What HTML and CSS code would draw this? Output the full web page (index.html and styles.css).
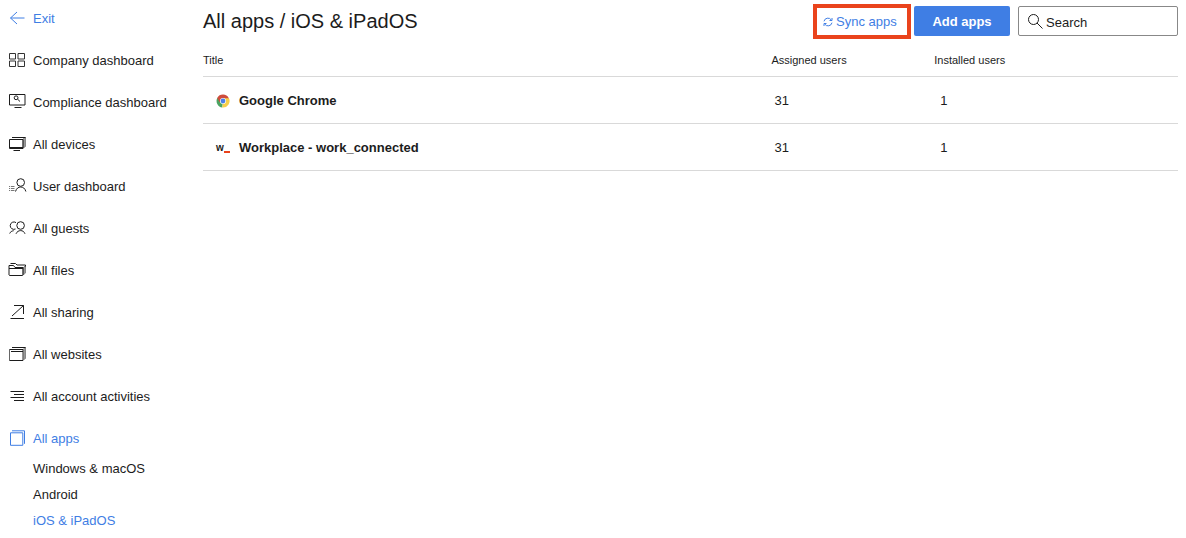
FILE: index.html
```
<!DOCTYPE html>
<html lang="en">
<head>
  <meta charset="UTF-8">
  <meta name="viewport" content="width=device-width, initial-scale=1.0">
  <title>All apps / iOS &amp; iPadOS</title>
  <link rel="stylesheet" href="styles.css">
</head>
<body>
  <div class="layout">
    <nav class="sidebar">
      <a class="nav-item active" href="#">
        <svg class="icon" viewBox="0 0 18 18"><path d="M16.5 9H2.5M9 3L2.5 9L9 15"/></svg>
        Exit
      </a>
      <a class="nav-item" href="#">
        <svg class="icon grid-icon" viewBox="0 0 18 18"><path d="M1.500 2.500h6v5.500h-6zM10 2.500h6.500v5.500h-6.500zM1.500 10h6v5.500h-6zM10 10h6.500v5.500h-6.500z"/></svg>
        Company dashboard
      </a>
      <a class="nav-item" href="#">
        <svg class="icon" viewBox="0 0 18 18"><path d="M1.5 1.5h15.500v10.500h-15.500zM6.500 14.500h7M9.600 6.200l2.400 2.300"/><circle cx="8.100" cy="4.800" r="1.900"/></svg>
        Compliance dashboard
      </a>
      <a class="nav-item" href="#">
        <svg class="icon" viewBox="0 0 18 18"><path class="shade" d="M15 4l2.500-1.500v9L15 13z"/><path d="M4 2.500h13.500M1.500 12.500h13.500M5.500 15.500h6.500M1.500 4.500h13.500v9h-13.500z"/></svg>
        All devices
      </a>
      <a class="nav-item" href="#">
        <svg class="icon" viewBox="0 0 18 18"><circle cx="12.700" cy="5.500" r="3.800"/><path d="M7.500 14.500c1-3.300 3-4.500 5.200-4.500s4.200 1.200 5.200 4.500"/><path class="dots" d="M1 9.500h1.200M3 9.500h3.500M1 11.500h1.200M3 11.500h3.500M1 13.500h1.200M3 13.500h3.500"/></svg>
        User dashboard
      </a>
      <a class="nav-item" href="#">
        <svg class="icon" viewBox="0 0 18 18"><circle cx="12.600" cy="6.500" r="3.800"/><path d="M8 3.600A3.700 3.700 0 1 0 7.500 10M8 14.800c1-2.200 2.700-3.200 4.600-3.200s3.600 1 4.400 3.200M1.700 14.500c.7-1.700 2-2.500 4-2.800"/></svg>
        All guests
      </a>
      <a class="nav-item" href="#">
        <svg class="icon" viewBox="0 0 18 18"><path class="shade" d="M15 7l2.500-2.500v7.500L15 14z"/><path d="M1 14V4.500h4.500l1.500 2h8v7.500l-.5.500h-13zM1 7.500h14M2.500 2.500h5l1.500 1.500h8.500v1.500"/></svg>
        All files
      </a>
      <a class="nav-item" href="#">
        <svg class="icon" viewBox="0 0 18 18"><path d="M6 2.500h9.500V11M15.500 2.500L4 13M2.500 15.500h13.500"/></svg>
        All sharing
      </a>
      <a class="nav-item" href="#">
        <svg class="icon" viewBox="0 0 18 18"><path class="shade" d="M15 4.500l2.500-2v11L15 15z"/><path class="shade-line" d="M1.500 4.500v11M15 4.500v11"/><path d="M1.500 15.500h13.500M1.500 4.500h13.500M3 6.500h12M4 2.500h13.500"/></svg>
        All websites
      </a>
      <a class="nav-item" href="#">
        <svg class="icon" viewBox="0 0 18 18"><path d="M2.500 4.500h13.500M6 7.500h10M2.500 10.500h13.500M6 13.500h10"/></svg>
        All account activities
      </a>
      <a class="nav-item active" href="#">
        <svg class="icon" viewBox="0 0 18 18"><path d="M2.500 3.800h12.300v12.500h-12.300zM4 1.800h12.500v13"/></svg>
        All apps
      </a>
      <div class="subnav">
        <a class="subnav-item" href="#">Windows &amp; macOS</a>
        <a class="subnav-item" href="#">Android</a>
        <a class="subnav-item active" href="#">iOS &amp; iPadOS</a>
      </div>
    </nav>

    <main class="content">
      <header class="toolbar">
        <h1>All apps / iOS &amp; iPadOS</h1>
        <button class="btn-sync" type="button">
          <svg class="sync-icon" viewBox="0 0 10 10"><path d="M1 4.300A4 4 0 0 1 8.300 3M9 5.700A4 4 0 0 1 1.700 7M9 1v2.500H6.500M1 9V6.500h2.500"/></svg>
          Sync apps
        </button>
        <button class="btn-add" type="button">Add apps</button>
        <label class="search">
          <svg class="search-icon" viewBox="0 0 16 16"><circle cx="6.500" cy="6.500" r="5"/><path d="M10 10l5.500 5.500"/></svg>
          <input type="text" placeholder="Search" aria-label="Search">
        </label>
      </header>

      <table class="apps">
        <thead>
          <tr>
            <th class="col-title">Title</th>
            <th class="col-assigned">Assigned users</th>
            <th class="col-installed">Installed users</th>
          </tr>
        </thead>
        <tbody>
          <tr>
            <td>
              <div class="app">
                <svg class="app-icon" viewBox="0 0 14 14">
                  <path fill="#4ba462" d="M7 7L1.400 3.800A6.500 6.500 0 0 0 6.300 13.500z"/>
                  <path fill="#f6cf4b" d="M7 7l-.7 6.500A6.500 6.500 0 0 0 12.800 4H7z"/>
                  <path fill="#cf4c3c" d="M7 7L3.700 8.200 1.200 4A6.500 6.500 0 0 1 12.800 4.200H7z"/>
                  <circle cx="7" cy="7" r="3" fill="#fff"/>
                  <circle cx="7" cy="7" r="2.400" fill="#4a80e8"/>
                </svg>
                Google Chrome
              </div>
            </td>
            <td class="assigned">31</td>
            <td class="installed">1</td>
          </tr>
          <tr>
            <td>
              <div class="app">
                <span class="app-icon work-logo">w<span class="work-line"></span></span>
                Workplace - work_connected
              </div>
            </td>
            <td class="assigned">31</td>
            <td class="installed">1</td>
          </tr>
        </tbody>
      </table>
    </main>
  </div>
</body>
</html>
```
FILE: styles.css
```
* {
  box-sizing: border-box;
}
body {
  margin: 0;
  font-family: "Liberation Sans", Arial, sans-serif;
  font-size: 13px;
  line-height: 17px;
  background: #fff;
  color: #1c1c1c;
}
a {
  color: inherit;
  text-decoration: none;
}
button, input {
  font: inherit;
}
svg {
  fill: none;
  stroke: currentColor;
}
.layout {
  display: flex;
}

/* sidebar */
.sidebar {
  display: flex;
  flex-direction: column;
  flex: 0 0 203px;
  gap: 8px;
  padding: 1px 8px 0;
}
.nav-item {
  display: flex;
  align-items: center;
  gap: 7px;
  height: 34px;
}
.icon {
  width: 18px;
  height: 18px;
  overflow: visible;
}
.grid-icon {
  stroke: #333;
}
.shade {
  fill: #999;
  stroke: #888;
}
.shade-line {
  stroke: #666;
}
.dots {
  stroke: #777;
}
.subnav {
  margin-top: -8px;
  padding-left: 25px;
}
.subnav-item {
  display: block;
  padding: 5px 0 4px;
}
.sidebar .active {
  color: #3f7ee4;
}

/* top bar */
.content {
  flex: 1;
  padding: 4px 8px 0 0;
}
.toolbar {
  display: flex;
  align-items: center;
  height: 34px;
}
h1 {
  flex: 1;
  margin: 0;
  font-size: 20px;
  font-weight: normal;
  line-height: 24px;
}
.btn-sync {
  display: flex;
  align-items: center;
  align-self: flex-start;
  gap: 3px;
  width: 98px;
  height: 35px;
  margin-right: 3px;
  padding: 0 0 0 6px;
  border: 4px solid #ea431c;
  background: #fff;
  color: #3f7ee4;
  cursor: pointer;
}
.sync-icon {
  width: 10px;
  height: 10px;
}
.btn-add {
  width: 96px;
  height: 30px;
  margin-right: 8px;
  border: none;
  border-radius: 2px;
  background: #3f7ee4;
  color: #fff;
  font-weight: bold;
  cursor: pointer;
}
.search {
  display: flex;
  align-items: center;
  gap: 3px;
  width: 160px;
  height: 30px;
  padding: 0 8px;
  border: 1px solid #888;
  border-radius: 2px;
}
.search-icon {
  flex: none;
  width: 16px;
  height: 16px;
}
.search input {
  width: 100%;
  padding: 2px 0 0;
  border: none;
  outline: none;
  background: none;
  color: #1c1c1c;
}
.search input::placeholder {
  color: #1c1c1c;
}

/* apps table */
.apps {
  width: 100%;
  table-layout: fixed;
  border-spacing: 0;
}
.apps th {
  padding: 15px 0 9px;
  border-bottom: 1px solid #d9d9d9;
  font-size: 11px;
  font-weight: normal;
  line-height: 14px;
  text-align: left;
}
.apps td {
  height: 47px;
  padding: 1px 0 0;
  border-bottom: 1px solid #d9d9d9;
}
.apps .col-title {
  width: 58.3%;
}
.apps .col-assigned {
  width: 16.7%;
}
.apps .assigned {
  padding-left: 3px;
}
.apps .installed {
  padding-left: 6px;
}
.app {
  display: flex;
  align-items: center;
  gap: 9px;
  padding-left: 13px;
  font-weight: bold;
}
.app-icon {
  width: 14px;
  height: 14px;
  stroke: none;
}
.work-logo {
  display: flex;
  align-items: flex-end;
  font-size: 10px;
  line-height: 14px;
}
.work-line {
  flex: 1;
  height: 2px;
  margin-bottom: 2px;
  background: #ea431c;
}
```
